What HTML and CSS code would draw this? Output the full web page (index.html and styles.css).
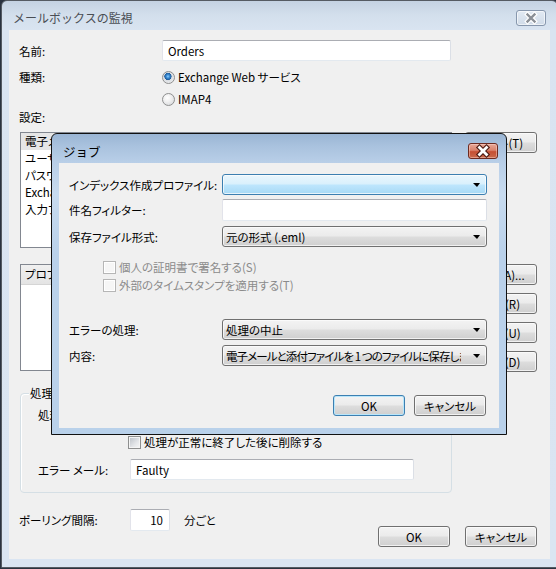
FILE: index.html
```html
<!DOCTYPE html>
<html lang="ja">
<head>
<meta charset="utf-8">
<link rel="stylesheet" href="styles.css">
</head>
<body>
<div class="window">
  <div class="titlebar">
    <span class="title">メールボックスの監視</span>
    <span class="close close-inactive">
      <svg width="30" height="16" viewBox="0 0 30 16"><path d="M11.5 4.5 L18.5 11.5 M18.5 4.5 L11.5 11.5" stroke="#ffffff" stroke-width="4.6" stroke-linecap="square" fill="none"/><path d="M11.5 4.5 L18.5 11.5 M18.5 4.5 L11.5 11.5" stroke="#8a8f96" stroke-width="2.4" stroke-linecap="square" fill="none"/></svg>
    </span>
  </div>
  <div class="client">
    <div class="row name-row">
      <span class="lbl">名前:</span>
      <div class="textbox name-box">Orders</div>
    </div>
    <div class="row radio-row">
      <span class="lbl">種類:</span>
      <span class="radio checked"></span><span class="rtext">Exchange Web サービス</span>
    </div>
    <div class="row radio-row">
      <span class="lbl"></span>
      <span class="radio"></span><span class="rtext">IMAP4</span>
    </div>
    <div class="lbl settings-lbl">設定:</div>
    <div class="list-row">
      <div class="listbox">
        <div class="item sel">電子メール アドレス</div>
        <div class="item">ユーザー名</div>
        <div class="item">パスワード</div>
        <div class="item">Exchange サーバー</div>
        <div class="item">入力フォルダー</div>
      </div>
      <div class="btncol">
        <div class="btn side">テスト(T)</div>
      </div>
    </div>
    <div class="list-row second">
      <div class="listview">
        <div class="lv-head">プロファイル</div>
      </div>
      <div class="btncol">
        <div class="btn side">追加(A)...</div>
        <div class="btn side">削除(R)</div>
        <div class="btn side">上へ(U)</div>
        <div class="btn side">下へ(D)</div>
      </div>
    </div>
    <div class="group">
      <div class="group-title">処理オプション</div>
      <div class="g-row g-first"><span class="glbl">処理方法:</span></div>
      <div class="g-row g-check">
        <span class="glbl"></span>
        <span class="check"></span><span class="ctext">処理が正常に終了した後に削除する</span>
      </div>
      <div class="g-row g-err">
        <span class="glbl">エラー メール:</span>
        <div class="textbox err-box">Faulty</div>
      </div>
    </div>
    <div class="bottom-row">
      <span class="lbl poll-lbl">ポーリング間隔:</span>
      <div class="textbox num-box">10</div>
      <span class="unit">分ごと</span>
      <div class="btn main-btn ok">OK</div>
      <div class="btn main-btn">キャンセル</div>
    </div>
  </div>
</div>

<div class="dialog">
  <div class="d-titlebar">
    <span class="d-title">ジョブ</span>
    <span class="close close-active">
      <svg width="30" height="16" viewBox="0 0 30 16"><path d="M11.5 4.5 L18.5 11.5 M18.5 4.5 L11.5 11.5" stroke="#4b1a12" stroke-width="5" stroke-linecap="square" fill="none"/><path d="M11.5 4.5 L18.5 11.5 M18.5 4.5 L11.5 11.5" stroke="#ffffff" stroke-width="2.8" stroke-linecap="square" fill="none"/></svg>
    </span>
  </div>
  <div class="d-client">
    <div class="d-row r1">
      <span class="dlbl">インデックス作成プロファイル:</span>
      <div class="combo hot"><span class="ctxt"></span><span class="arrow"></span></div>
    </div>
    <div class="d-row r2">
      <span class="dlbl">件名フィルター:</span>
      <div class="textbox d-text"></div>
    </div>
    <div class="d-row r3">
      <span class="dlbl">保存ファイル形式:</span>
      <div class="combo"><span class="ctxt">元の形式 (.eml)</span><span class="arrow"></span></div>
    </div>
    <div class="d-check c1">
      <span class="check disabled"></span><span class="dis-text">個人の証明書で署名する(S)</span>
    </div>
    <div class="d-check c2">
      <span class="check disabled"></span><span class="dis-text">外部のタイムスタンプを適用する(T)</span>
    </div>
    <div class="d-row r4">
      <span class="dlbl">エラーの処理:</span>
      <div class="combo"><span class="ctxt">処理の中止</span><span class="arrow"></span></div>
    </div>
    <div class="d-row r5">
      <span class="dlbl">内容:</span>
      <div class="combo"><span class="ctxt tight">電子メールと添付ファイルを 1 つのファイルに保存します</span><span class="arrow"></span></div>
    </div>
    <div class="d-buttons">
      <div class="btn d-btn default">OK</div>
      <div class="btn d-btn">キャンセル</div>
    </div>
  </div>
</div>
</body>
</html>
```
FILE: styles.css
```css
html, body {
  margin: 0;
  padding: 0;
}
body {
  width: 556px;
  height: 569px;
  overflow: hidden;
  position: relative;
  background: #2a3340;
  font-family: "Noto Sans CJK JP", sans-serif;
  font-size: 11.5px;
  line-height: 14px;
  color: #000;
  font-feature-settings: "palt";
  white-space: nowrap;
}

/* ---------- main window ---------- */
.window {
  position: absolute;
  left: 1px;
  top: 0;
  width: 557px;
  height: 568px;
  box-sizing: border-box;
  border: 1px solid #555b63;
  border-radius: 6px 6px 0 0;
  background: linear-gradient(#c4d2e2 0px, #d3dfec 14px, #d9e4f1 29px, #dae5f2 100%);
  padding: 0 7px 7px 7px;
}
.titlebar {
  height: 29px;
  display: flex;
  align-items: flex-start;
  padding-right: 4px;
}
.title {
  margin-top: 10px;
  margin-left: 4px;
  font-size: 12px;
  color: #4a4e54;
  font-feature-settings: normal;
}
.close {
  margin-left: auto;
  margin-top: 9px;
  width: 30px;
  height: 16px;
  box-sizing: border-box;
  border-radius: 3px;
  display: flex;
}
.close svg { display: block; margin: -1px; }
.close-inactive {
  border: 1px solid #8797ad;
  background: linear-gradient(#e2eaf3, #d0dbe8);
  box-shadow: inset 0 0 0 1px rgba(255,255,255,0.6);
}
.client {
  width: 541px;
  height: 529px;
  box-sizing: border-box;
  background: #f0f0f0;
  padding: 10px 13px 0 10px;
}
.row {
  display: flex;
  align-items: center;
}
.lbl {
  width: 143px;
  flex: none;
}
.name-row { height: 21px; }
.textbox {
  box-sizing: border-box;
  background: #fff;
  border: 1px solid;
  border-color: #abadb3 #dbdfe6 #e3e9ef #e2e3ea;
  border-radius: 2px;
  height: 21px;
  padding: 0 0 0 5px;
  display: flex;
  align-items: center;
}
.name-box { width: 289px; }
.radio-row { height: 22px; }
.name-row + .radio-row { margin-top: 5px; }
.radio {
  width: 13px;
  height: 13px;
  box-sizing: border-box;
  border-radius: 50%;
  border: 1px solid #8e8f8f;
  background: radial-gradient(circle at 40% 35%, #ffffff 0, #f0f0f0 40%, #cfd2d6 100%);
  flex: none;
}
.radio.checked {
  background: radial-gradient(circle at 45% 40%, #8fd0ff 0, #3d8fd8 1.6px, #1c5a9a 3.4px, #d9dde2 3.8px, #f4f4f4 100%);
}
.rtext { margin-left: 3px; }
.settings-lbl {
  height: 14px;
}
.list-row {
  display: flex;
  margin-top: 8px;
  margin-left: 1px;
}
.list-row.second { margin-top: 16px; }
.listbox, .listview {
  width: 432px;
  box-sizing: border-box;
  border: 1px solid #828790;
  background: #fff;
  overflow: hidden;
  flex: none;
}
.listbox { height: 116px; }
.listview { height: 107px; }
.item {
  height: 17px;
  line-height: 17px;
  padding-left: 4px;
}
.item.sel { background: #e6e6e6; }
.lv-head {
  height: 19px;
  line-height: 19px;
  padding-left: 4px;
  background: linear-gradient(#f0f0f0, #e4e4e4);
  border-bottom: 1px solid #d5d5d5;
}
.btncol {
  margin-left: 13px;
  display: flex;
  flex-direction: column;
  gap: 8px;
}
.btn {
  box-sizing: border-box;
  height: 21px;
  width: 72px;
  border: 1px solid #707070;
  border-radius: 3px;
  background: linear-gradient(#f3f3f3 0%, #ebebeb 48%, #dddddd 52%, #cfcfcf 100%);
  box-shadow: inset 0 0 0 1px rgba(252,252,252,0.75);
  display: flex;
  align-items: center;
  justify-content: center;
}

/* group box */
.group {
  margin-top: 21px;
  margin-left: 1px;
  width: 432px;
  box-sizing: border-box;
  border: 1px solid #d5dfe5;
  border-radius: 4px;
  box-shadow: inset 1px 1px 0 #fff;
  padding: 0 0 12px 17px;
}
.group-title {
  width: max-content;
  height: 14px;
  margin-top: -8px;
  margin-left: -9px;
  padding: 0 1px;
  background: #f0f0f0;
}
.g-row {
  display: flex;
  align-items: center;
}
.glbl { width: 92px; flex: none; }
.g-first { height: 20px; margin-top: 5px; }
.g-check { height: 18px; margin-top: 8px; }
.g-check .glbl { width: 90px; }
.g-err { margin-top: 8px; }
.err-box { width: 284px; }
.check {
  width: 13px;
  height: 13px;
  box-sizing: border-box;
  border: 1px solid #8e8f8f;
  background: linear-gradient(135deg, #b9bec5 0%, #e4e6e9 60%, #f7f7f7 100%);
  box-shadow: inset 0 0 0 1px #f4f4f4;
  flex: none;
}
.check.disabled {
  border-color: #b6b6b6;
  background: #f6f6f6;
  box-shadow: inset 0 0 0 1px #ffffff;
}
.ctext { margin-left: 3px; }

.bottom-row {
  display: flex;
  align-items: flex-start;
  margin-top: 16px;
}
.poll-lbl {
  width: 111px;
  margin-top: 4px;
}
.num-box {
  width: 40px;
  height: 22px;
  justify-content: flex-end;
  padding: 0 6px 0 0;
}
.unit {
  margin-left: 14px;
  margin-top: 4px;
}
.main-btn { margin-top: 17px; }
.main-btn.ok { margin-left: auto; margin-right: 15px; }

/* ---------- dialog ---------- */
.dialog {
  position: absolute;
  left: 51px;
  top: 133px;
  width: 456px;
  height: 302px;
  box-sizing: border-box;
  border: 1px solid #111;
  border-radius: 6px 6px 0 0;
  background: linear-gradient(#9ab5d4 0px, #a9c2de 12px, #b9cfe8 29px, #c8dbef 60px, #bad1ea 120px, #b9d1ea 100%);
  padding: 0 7px 6px 7px;
}
.d-titlebar {
  height: 29px;
  display: flex;
  align-items: flex-start;
  padding-right: 1px;
}
.d-title {
  margin-top: 11px;
  margin-left: 4px;
  font-feature-settings: normal;
  font-size: 12.5px;
}
.close-active {
  margin-top: 9px;
  border: 1px solid #6d2a20;
  background: linear-gradient(#e8a898 0%, #d9826c 45%, #c54f33 55%, #c96a4c 100%);
  box-shadow: inset 0 0 0 1px rgba(255,220,210,0.45);
}
.d-client {
  height: 265px;
  box-sizing: border-box;
  background: #f0f0f0;
  padding: 11px 12px 0 10px;
}
.d-row {
  display: flex;
  align-items: center;
  height: 21px;
}
.dlbl { width: 153px; flex: none; }
.r2 { margin-top: 4px; height: 22px; }
.r3 { margin-top: 5px; }
.r4 { margin-top: 25px; }
.r5 { margin-top: 5px; }
.combo {
  box-sizing: border-box;
  width: 265px;
  height: 21px;
  border: 1px solid #707070;
  border-radius: 3px;
  background: linear-gradient(#f3f3f3 0%, #ebebeb 48%, #dddddd 52%, #cfcfcf 100%);
  box-shadow: inset 0 0 0 1px rgba(252,252,252,0.75);
  display: flex;
  align-items: center;
  padding: 0 6px 0 3px;
  overflow: hidden;
}
.combo.hot {
  border-color: #3c7fb1;
  background: linear-gradient(#eaf6fd 0%, #d9f0fc 48%, #bee6fd 52%, #a7d9f5 100%);
}
.ctxt {
  flex: 1;
  overflow: hidden;
  margin-right: 12px;
}
.ctxt.tight { letter-spacing: -0.9px; }
.arrow {
  width: 0;
  height: 0;
  border-left: 4px solid transparent;
  border-right: 3px solid transparent;
  border-top: 4px solid #000;
  flex: none;
}
.d-text { width: 265px; height: 22px; }
.d-check {
  display: flex;
  align-items: center;
  height: 18px;
  padding-left: 34px;
}
.c1 { margin-top: 11px; }
.dis-text { margin-left: 3px; color: #8b8b8b; }
.d-buttons {
  display: flex;
  justify-content: flex-end;
  gap: 9px;
  margin-top: 29px;
  padding-right: 1px;
}
.d-btn.default {
  border-color: #3c7fb1;
  box-shadow: inset 0 0 0 1px #b8e6fb;
}
```
